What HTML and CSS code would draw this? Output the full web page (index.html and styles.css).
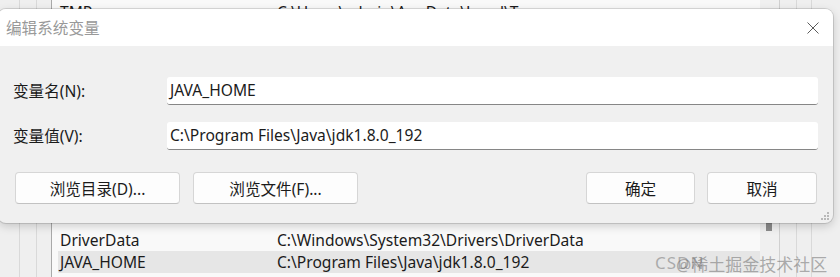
FILE: index.html
```html
<!DOCTYPE html>
<html>
<head>
    <title>编辑系统变量</title>
    <meta charset="utf-8">
    <link rel="stylesheet" href="styles.css">
</head>
<body>
    <div class="desk">
        <div class="rail r1"></div>
        <div class="rail r2"></div>
        <div class="rail r3"></div>
        <div class="list">
            <div class="row top"><span class="name">TMP</span><span class="value">C:\Users\admin\AppData\Local\Temp</span></div>
            <div class="spacer"></div>
            <div class="row"><span class="name">DriverData</span><span class="value">C:\Windows\System32\Drivers\DriverData</span></div>
            <div class="row selected"><span class="name">JAVA_HOME</span><span class="value">C:\Program Files\Java\jdk1.8.0_192</span></div>
        </div>
        <div class="scroll"><div class="thumb"></div></div>
        <div class="rail r4"></div>
        <div class="rail r5"></div>
        <div class="rail r6"></div>
    </div>

    <div class="dialog">
        <div class="titlebar">
            <span class="title">编辑系统变量</span>
            <svg class="close" width="12" height="12" viewBox="0 0 12 12">
                <path d="M0.5 0.5 L11.5 11.5 M11.5 0.5 L0.5 11.5" stroke="#5c5c5c" stroke-width="1" fill="none"/>
            </svg>
        </div>
        <div class="body">
            <div class="fields">
                <label>变量名(N):</label>
                <div class="input">JAVA_HOME</div>
                <label>变量值(V):</label>
                <div class="input">C:\Program Files\Java\jdk1.8.0_192</div>
            </div>
            <div class="buttons">
                <button class="wide">浏览目录(D)...</button>
                <button class="wide">浏览文件(F)...</button>
                <div class="fill"></div>
                <button class="narrow">确定</button>
                <button class="narrow cancel">取消</button>
            </div>
        </div>
        <svg class="grip" width="10" height="10" viewBox="0 0 10 10">
            <rect x="7" y="1" width="2" height="2" fill="#b8b8b8"/>
            <rect x="4" y="4" width="2" height="2" fill="#b8b8b8"/>
            <rect x="7" y="4" width="2" height="2" fill="#b8b8b8"/>
            <rect x="1" y="7" width="2" height="2" fill="#b8b8b8"/>
            <rect x="4" y="7" width="2" height="2" fill="#b8b8b8"/>
            <rect x="7" y="7" width="2" height="2" fill="#b8b8b8"/>
        </svg>
    </div>

    <div class="mark">CSDN</div>
    <div class="mark shift">@稀土掘金技术社区</div>
</body>
</html>
```

FILE: styles.css
```css
body { margin: 0; font-family: 'Noto Sans', 'Noto Sans CJK SC', sans-serif; font-size: 15.6px; color: #1b1b1b; overflow: hidden; }

.desk { display: flex; width: 840px; height: 277px; background: #f0f0f0; }
.rail { background: #efefef; border-right: 1px solid #d9d9d9; }
.r1 { width: 19px; }
.r2 { width: 16px; }
.r3 { width: 14px; border-right-color: #a9a9a9; }
.r4 { width: 16px; }
.r5 { width: 14px; }
.r6 { flex: 1; border-right: none; }

.list { width: 708px; display: flex; flex-direction: column; background: #f9f9f9; padding: 1px 0 4px; }
.spacer { flex: 1; }
.row { display: flex; height: 22px; line-height: 22px; padding-left: 8px; white-space: nowrap; }
.row.selected { background: #e6e6e6; margin-left: 6px; padding-left: 2px; }
.row .name { width: 217px; }
.scroll { width: 19px; background: #f0f0f0; border-right: 1px solid #d0d0d0; }
.thumb { width: 6px; height: 8px; margin: 223px 0 0 6px; background: #8a8a8a; }

.dialog { position: absolute; left: -2px; top: 9px; width: 835px; height: 214px; border-radius: 8px; background: #f0f0f0; overflow: hidden; box-shadow: 0 0 0 1px rgba(0,0,0,0.12), 0 3px 10px rgba(0,0,0,0.18); }
.titlebar { height: 37px; background: #fff; display: flex; align-items: center; justify-content: space-between; padding: 0 14px 0 8px; }
.title { color: #999; }
.close { margin-top: 1px; }

.body { padding: 31px 15px 0 15px; }
.fields { display: grid; grid-template-columns: 154px 1fr; row-gap: 17px; align-items: center; }
label { line-height: 28px; }
.input { height: 27px; line-height: 27px; background: #fff; border-bottom: 1px solid #868686; border-radius: 3px; padding-left: 3px; }

.buttons { display: flex; gap: 13px; margin-top: 22px; padding-left: 2px; }
.fill { flex: 1; }
button { height: 32px; font-family: inherit; font-size: 15.6px; color: #1b1b1b; background: #fdfdfd; border: 1px solid #d6d6d6; border-bottom-color: #c2c2c2; border-radius: 4px; padding: 0; }
.wide { width: 165px; }
.narrow { width: 109px; }
.cancel { width: 110px; margin-left: -1px; margin-right: 1px; }

.grip { position: absolute; right: 3px; bottom: 2px; }

.mark { position: absolute; left: 655px; top: 251px; font-size: 17px; color: rgba(110,110,110,0.5); white-space: nowrap; letter-spacing: 1px; }
.mark.shift { left: 676px; color: rgba(110,110,110,0.55); letter-spacing: 0; }
```
